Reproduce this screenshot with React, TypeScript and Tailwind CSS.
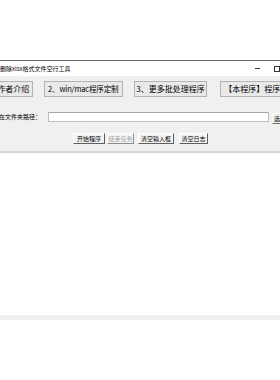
import React from 'react';

const cjk = "font-['Noto_Sans_CJK_SC','Noto_Sans',sans-serif]";

export default function App() {
    return (
        <div className={`w-[280px] h-[380px] overflow-hidden bg-white text-black ${cjk}`}>
            <div className="h-[60px]" />
            {/* window, its left edge runs off the screen */}
            <div className="ml-[-30px] w-[340px] border-t border-[#6a6a6a]">
                <div className="h-[15px] bg-white flex items-center">
                    <span className="ml-[18px] text-[6px] leading-none whitespace-nowrap">批量删除xlsx格式文件空行工具</span>
                    <span className="ml-auto mr-[30px] flex items-center gap-[14px]">
                        <span className="w-[5px] h-px bg-[#333]" />
                        <span className="w-[6px] h-[6px] border border-[#333]" />
                    </span>
                </div>

                <div className="bg-[#f0f0f0]">
                    <div className="pt-[5px] flex h-[21px] text-[8px] leading-none whitespace-nowrap">
                        <button className="ml-[11px] w-[52px] h-[16px] bg-[#e9e9e9] border border-[#b4b4b4] flex items-center justify-center">1、作者介绍</button>
                        <button className="ml-[11px] w-[79px] h-[16px] bg-[#e9e9e9] border border-[#b4b4b4] flex items-center justify-center text-[7.5px] tracking-[-0.15px]">2、win/mac程序定制</button>
                        <button className="ml-[11px] w-[74px] h-[16px] bg-[#e9e9e9] border border-[#b4b4b4] flex items-center justify-center">3、更多批处理程序</button>
                        <button className="ml-[13px] w-[90px] h-[16px] bg-[#e9e9e9] border border-[#b4b4b4] flex items-center justify-start pl-[3px]">【本程序】程序说明</button>
                    </div>

                    <div className="mt-[15px] flex items-start h-[12px]">
                        <span className="w-[72px] text-right text-[6px] leading-[10px] whitespace-nowrap pr-[1px]">文件所在文件夹路径：</span>
                        <div className="ml-[6px] w-[221px] h-[10px] bg-white border border-[#bdbdbd] border-t-[#a8a8a8]" />
                        <button className="ml-[3px] mt-[1px] w-[18px] h-[11px] bg-[#f0f0f0] border border-t-white border-l-white border-r-[#6e6e6e] border-b-[#6e6e6e] text-[6px] leading-none flex items-center pl-[1px]">选择</button>
                    </div>

                    <div className="mt-[9px] flex h-[11px] text-[6px] leading-none whitespace-nowrap">
                        <button className="ml-[103px] w-[32px] h-[11px] bg-[#f4f4f4] border border-t-white border-l-white border-r-[#5e5e5e] border-b-[#5e5e5e] flex items-center justify-center">开始程序</button>
                        <button className="ml-[2px] w-[27px] h-[11px] bg-[#f4f4f4] border border-t-white border-l-white border-r-[#8c8c8c] border-b-[#8c8c8c] text-[#a3a3a3] flex items-center justify-center">结束任务</button>
                        <button className="ml-[4px] w-[36px] h-[11px] bg-[#f4f4f4] border border-t-white border-l-white border-r-[#5e5e5e] border-b-[#5e5e5e] flex items-center justify-center">清空输入框</button>
                        <button className="ml-[5px] w-[29px] h-[11px] bg-[#f4f4f4] border border-t-white border-l-white border-r-[#5e5e5e] border-b-[#5e5e5e] flex items-center justify-center">清空日志</button>
                    </div>

                    <div className="h-[7px]" />
                </div>
                <div className="h-[2px] bg-[#d6d6d6]" />

                {/* log area */}
                <div className="h-[162px] bg-white" />
                <div className="h-[5px] bg-[#efefef]" />
            </div>
        </div>
    );
}
